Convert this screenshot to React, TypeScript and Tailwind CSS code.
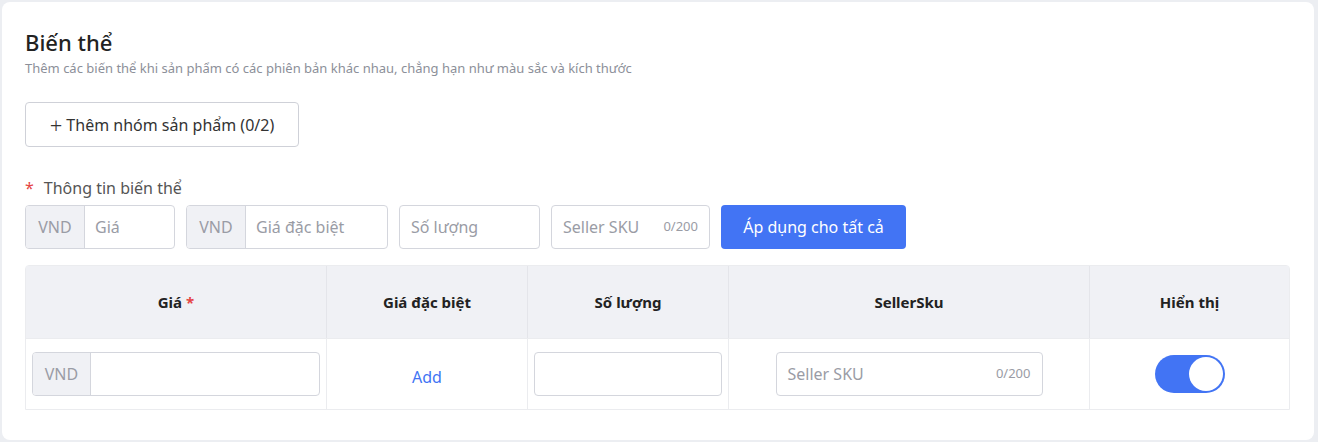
export default function App() {
  const inp = "h-[44px] border border-[#d4d6dd] rounded-[4px] bg-white flex items-center";
  return (
    <div className="w-[1318px] h-[442px] bg-[#eceef2] p-[2px] pr-[4px]" style={{ fontFamily: '"Noto Sans", sans-serif' }}>
      <div className="h-[438px] bg-white rounded-[8px] pl-[23px] pr-[24px] pt-[26px]">
        <div className="text-[22px] leading-[28px] font-medium text-[#222]">Biến thể</div>
        <div className="text-[13px] leading-[18px] text-[#8c8f99] mt-[3px]">Thêm các biến thể khi sản phẩm có các phiên bản khác nhau, chẳng hạn như màu sắc và kích thước</div>
        <button className="mt-[25px] h-[45px] w-[274px] border border-[#cfd1d8] rounded-[4px] text-[16px] text-[#333] flex items-center justify-center gap-1">
          <span className="text-[22px] font-light leading-none">+</span>Thêm nhóm sản phẩm (0/2)
        </button>
        <div className="mt-[29px] text-[16px] leading-[24px] text-[#555]"><span className="text-[#e54545] mr-[10px]">*</span>Thông tin biến thể</div>
        <div className="mt-[5px] flex gap-[11px] text-[16px] text-[#9a9ca5]">
          <div className={inp + " w-[150px] overflow-hidden"}><span className="bg-[#f0f1f5] h-full w-[59px] flex items-center justify-center border-r border-[#d4d6dd]">VND</span><span className="pl-[10px]">Giá</span></div>
          <div className={inp + " w-[202px] overflow-hidden"}><span className="bg-[#f0f1f5] h-full w-[59px] flex items-center justify-center border-r border-[#d4d6dd]">VND</span><span className="pl-[10px]">Giá đặc biệt</span></div>
          <div className={inp + " w-[141px] px-[11px]"}>Số lượng</div>
          <div className={inp + " w-[159px] px-[11px] justify-between"}><span>Seller SKU</span><span className="text-[13px]">0/200</span></div>
          <button className="h-[44px] w-[185px] bg-[#4274f4] rounded-[4px] text-white text-[16px]">Áp dụng cho tất cả</button>
        </div>
        <div className="mt-[16px] border border-[#ebecef] rounded-t-[4px]">
          <div className="grid grid-cols-[301px_201px_201px_361px_1fr] h-[72px] bg-[#f0f1f5] text-[15px] font-bold text-[#222]">
            <div className="flex items-center justify-center border-r border-[#e4e5ea]">Giá <span className="text-[#e54545] ml-1">*</span></div>
            <div className="flex items-center justify-center border-r border-[#e4e5ea]">Giá đặc biệt</div>
            <div className="flex items-center justify-center border-r border-[#e4e5ea]">Số lượng</div>
            <div className="flex items-center justify-center border-r border-[#e4e5ea]">SellerSku</div>
            <div className="flex items-center justify-center">Hiển thị</div>
          </div>
          <div className="grid grid-cols-[301px_201px_201px_361px_1fr] h-[71px] border-t border-[#ebecef] text-[16px] text-[#9a9ca5]">
            <div className="flex items-center px-[6px] border-r border-[#ebecef]">
              <div className={inp + " w-full overflow-hidden"}><span className="bg-[#f0f1f5] h-full w-[58px] flex items-center justify-center border-r border-[#d4d6dd]">VND</span></div>
            </div>
            <div className="flex items-center justify-center border-r border-[#ebecef] text-[#4274f4] pt-[6px]">Add</div>
            <div className="flex items-center px-[6px] border-r border-[#ebecef]"><div className={inp + " w-full"}></div></div>
            <div className="flex items-center justify-center border-r border-[#ebecef]">
              <div className={inp + " w-[267px] px-[11px] justify-between"}><span>Seller SKU</span><span className="text-[13px]">0/200</span></div>
            </div>
            <div className="flex items-center justify-center">
              <div className="w-[70px] h-[38px] rounded-full bg-[#4274f4] flex items-center justify-end pr-[2px]">
                <div className="w-[34px] h-[34px] rounded-full bg-white"></div>
              </div>
            </div>
          </div>
        </div>
      </div>
    </div>
  );
}
